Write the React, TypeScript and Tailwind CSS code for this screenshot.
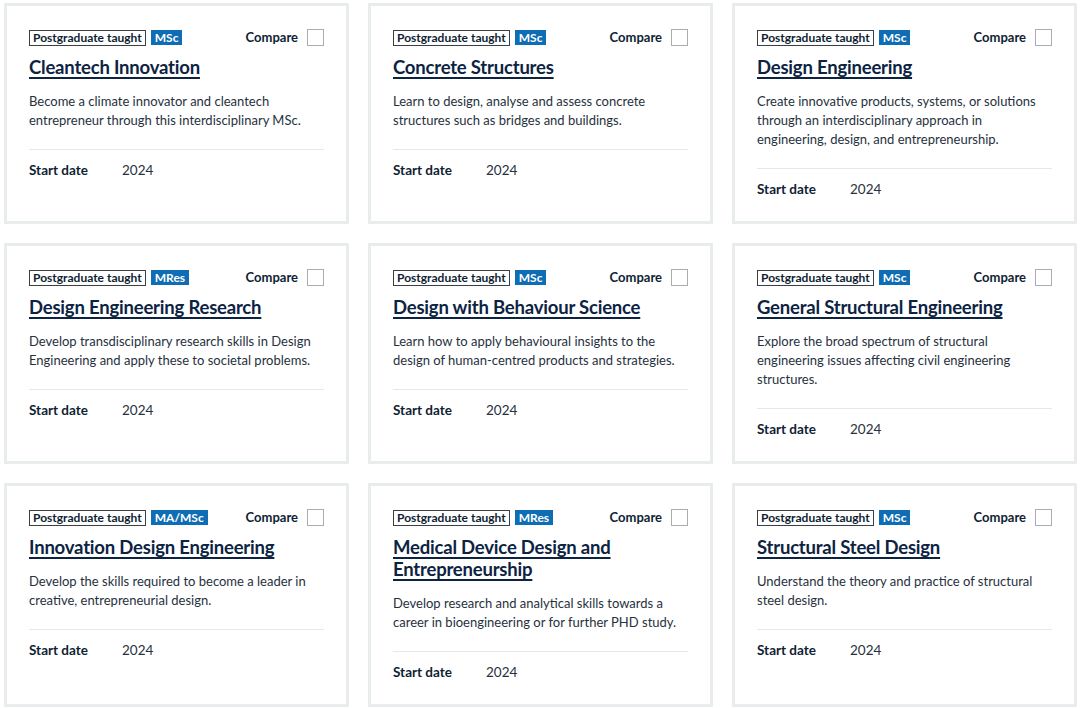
import React from "react";

type Course = {
  title: string;
  award: string;
  summary: string;
};

const courses: Course[] = [
  {
    title: "Cleantech Innovation",
    award: "MSc",
    summary:
      "Become a climate innovator and cleantech entrepreneur through this interdisciplinary MSc.",
  },
  {
    title: "Concrete Structures",
    award: "MSc",
    summary:
      "Learn to design, analyse and assess concrete structures such as bridges and buildings.",
  },
  {
    title: "Design Engineering",
    award: "MSc",
    summary:
      "Create innovative products, systems, or solutions through an interdisciplinary approach in engineering, design, and entrepreneurship.",
  },
  {
    title: "Design Engineering Research",
    award: "MRes",
    summary:
      "Develop transdisciplinary research skills in Design Engineering and apply these to societal problems.",
  },
  {
    title: "Design with Behaviour Science",
    award: "MSc",
    summary:
      "Learn how to apply behavioural insights to the design of human-centred products and strategies.",
  },
  {
    title: "General Structural Engineering",
    award: "MSc",
    summary:
      "Explore the broad spectrum of structural engineering issues affecting civil engineering structures.",
  },
  {
    title: "Innovation Design Engineering",
    award: "MA/MSc",
    summary:
      "Develop the skills required to become a leader in creative, entrepreneurial design.",
  },
  {
    title: "Medical Device Design and Entrepreneurship",
    award: "MRes",
    summary:
      "Develop research and analytical skills towards a career in bioengineering or for further PHD study.",
  },
  {
    title: "Structural Steel Design",
    award: "MSc",
    summary: "Understand the theory and practice of structural steel design.",
  },
];

const CourseCard = ({ course }: { course: Course }) => {
  return (
    <div className="flex flex-col border-[3px] border-[#e8ecec] bg-white px-[22px] pt-[23px] pb-[22px]">
      {/* tags + compare */}
      <div className="flex items-center justify-between h-[17px]">
        <div className="flex items-center gap-[5px]">
          <span className="border border-[#3a3f47] px-[3px] h-[16px] leading-[14px] text-[12px] font-bold text-[#0f1e33]">
            Postgraduate taught
          </span>
          <span className="bg-[#0e6db4] px-[4px] h-[15px] leading-[15px] text-[12px] font-bold text-white">
            {course.award}
          </span>
        </div>
        <label className="flex items-center gap-[9px]">
          <span className="text-[13px] font-bold text-[#0f1e33]">Compare</span>
          <span className="block w-[17px] h-[17px] border border-[#a9adb1] bg-white" />
        </label>
      </div>

      {/* title */}
      <a
        href="#"
        className="mt-[10px] text-[18.5px] leading-[22px] font-bold tracking-[-0.2px] text-[#0c2342] underline decoration-2 underline-offset-[3px]"
      >
        {course.title}
      </a>

      {/* summary */}
      <p className="mt-[14px] text-[13px] leading-[19px] text-[#27313d]">
        {course.summary}
      </p>

      {/* start date */}
      <div className="mt-[19px] border-t border-[#e6e8ea] pt-[10px] flex items-center h-[31px] text-[13.5px]">
        <span className="w-[93px] font-bold text-[#0f1e33]">Start date</span>
        <span className="text-[#27313d]">2024</span>
      </div>
    </div>
  );
};

export default function App() {
  return (
    <div
      className="min-h-screen bg-white pl-[4px] pt-[3px]"
      style={{ fontFamily: 'Lato, "Noto Sans", sans-serif' }}
    >
      <div className="grid grid-cols-3 gap-[19px] w-[1073px]">
        {courses.map((c) => (
          <CourseCard key={c.title} course={c} />
        ))}
      </div>
    </div>
  );
}
